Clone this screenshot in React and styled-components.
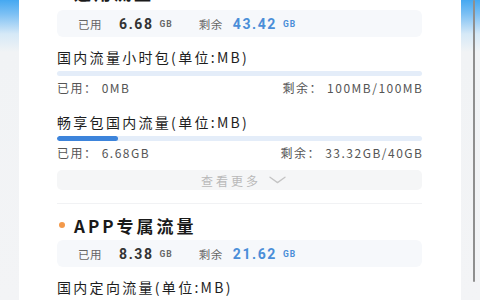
import React from 'react';
import styled, { createGlobalStyle } from 'styled-components';

const GlobalStyle = createGlobalStyle`
  html, body {
    margin: 0;
    padding: 0;
    height: 300px;
    overflow: hidden;
  }
  body {
    font-family: "Noto Sans CJK SC", "Noto Sans", sans-serif;
    color: #222;
  }
`;

const packages = [
  { name: '国内流量小时包(单位:MB)', used: '0MB', left: '100MB/100MB', pct: 0 },
  { name: '畅享包国内流量(单位:MB)', used: '6.68GB', left: '33.32GB/40GB', pct: 16.7 },
];

const ChevronDown = () => (
  <svg width="17" height="8" viewBox="0 0 17 8" fill="none">
    <path d="M1 1.2 L8.5 6.6 L16 1.2" stroke="#c4c4c4" strokeWidth="1.3" strokeLinecap="round" strokeLinejoin="round" />
  </svg>
);

const Summary = ({ used, left }) => (
  <SummaryBox>
    <SumLabel>已用</SumLabel>
    <SumValue>{used}</SumValue>
    <SumUnit>GB</SumUnit>
    <SumLabel $gap>剩余</SumLabel>
    <SumValue $blue>{left}</SumValue>
    <SumUnit $blue>GB</SumUnit>
  </SummaryBox>
);

const Package = ({ name, used, left, pct }) => (
  <Item>
    <ItemTitle>{name}</ItemTitle>
    <Track>
      <Fill style={{ width: `${pct}%` }} />
    </Track>
    <UsageRow>
      <span>已用：&nbsp;{used}</span>
      <span>剩余：&nbsp;{left}</span>
    </UsageRow>
  </Item>
);

const App = () => {
  return (
    <Page>
      <GlobalStyle />
      <Card>
        <Scroller>
          <SectionHead $scrolled>
            <Dot $color="#4a8ed8" />
            通用流量
          </SectionHead>
          <Summary used="6.68" left="43.42" />
          {packages.map((p) => (
            <Package key={p.name} {...p} />
          ))}
          <MoreButton>
            查看更多
            <ChevronDown />
          </MoreButton>
          <Divider />
          <SectionHead>
            <Dot $color="#f3994a" />
            APP专属流量
          </SectionHead>
          <Summary used="8.38" left="21.62" />
          <Item>
            <ItemTitle>国内定向流量(单位:MB)</ItemTitle>
          </Item>
        </Scroller>
      </Card>
      <ScrollThumb />
    </Page>
  );
};

const Page = styled.div`
  position: relative;
  height: 300px;
  padding: 0 19px;
  box-sizing: border-box;
  background: linear-gradient(180deg, #45a8f1 0px, #7cc0f4 14px, #d6e9f7 34px, #f1f3f5 52px, #f3f4f6 100%);
  overflow: hidden;
`;

const Card = styled.div`
  height: 300px;
  background: #fff;
  overflow: hidden;
`;

const Scroller = styled.div`
  margin-top: -19px;
  padding: 0 39px 0 38px;
  display: flex;
  flex-direction: column;
`;

const SectionHead = styled.div`
  display: flex;
  align-items: center;
  gap: 9px;
  height: 22px;
  padding-left: 2px;
  margin-bottom: ${(p) => (p.$scrolled ? '3px' : '0')};
  font-size: 17px;
  font-weight: 700;
  letter-spacing: 3px;
  color: #1a1a1a;
`;

const Dot = styled.span`
  width: 6px;
  height: 6px;
  border-radius: 50%;
  background: ${(p) => p.$color};
  flex: none;
`;

const SummaryBox = styled.div`
  display: flex;
  align-items: center;
  height: 27px;
  margin-top: 4px;
  padding-left: 21px;
  border-radius: 6px;
  background: #f6f8fb;
`;

const SumLabel = styled.span`
  font-size: 11.5px;
  letter-spacing: 0.5px;
  color: #666;
  margin-left: ${(p) => (p.$gap ? '26px' : '0')};
  margin-right: ${(p) => (p.$gap ? '10px' : '17px')};
`;

const SumValue = styled.span`
  font-family: Roboto, "Liberation Sans", sans-serif;
  font-weight: 700;
  font-size: 14px;
  letter-spacing: 1.6px;
  color: ${(p) => (p.$blue ? '#4a8ed8' : '#333')};
`;

const SumUnit = styled.span`
  font-family: Roboto, "Liberation Sans", sans-serif;
  font-weight: 700;
  font-size: 8.5px;
  letter-spacing: 1px;
  margin-left: 6px;
  color: ${(p) => (p.$blue ? '#4a8ed8' : '#666')};
`;

const Item = styled.div`
  margin-top: 11px;
  & + & {
    margin-top: 18px;
  }
`;

const ItemTitle = styled.div`
  font-size: 14px;
  line-height: 18px;
  letter-spacing: 2.3px;
  color: #1e1e1e;
  white-space: nowrap;
`;

const Track = styled.div`
  height: 5px;
  margin-top: 5px;
  border-radius: 3px;
  background: #e4edf9;
  overflow: hidden;
`;

const Fill = styled.div`
  height: 100%;
  border-radius: 3px;
  background: #3d84db;
`;

const UsageRow = styled.div`
  display: flex;
  justify-content: space-between;
  margin-top: 5px;
  font-size: 12px;
  line-height: 14px;
  letter-spacing: 1.5px;
  color: #555;
  span:last-child {
    margin-right: -1.5px;
  }
`;

const MoreButton = styled.div`
  display: flex;
  align-items: center;
  justify-content: center;
  gap: 8px;
  height: 20px;
  margin-top: 10px;
  padding-left: 8px;
  border-radius: 5px;
  background: #f5f6f7;
  font-size: 12px;
  letter-spacing: 3px;
  color: #b9b9b9;
`;

const Divider = styled.div`
  height: 1px;
  margin-top: 13px;
  margin-bottom: 10px;
  background: #f1f2f4;
`;

const ScrollThumb = styled.div`
  position: absolute;
  top: 0;
  right: 5px;
  width: 2.5px;
  height: 282px;
  border-radius: 2px;
  background: #8f8f8f;
`;

export default App;
